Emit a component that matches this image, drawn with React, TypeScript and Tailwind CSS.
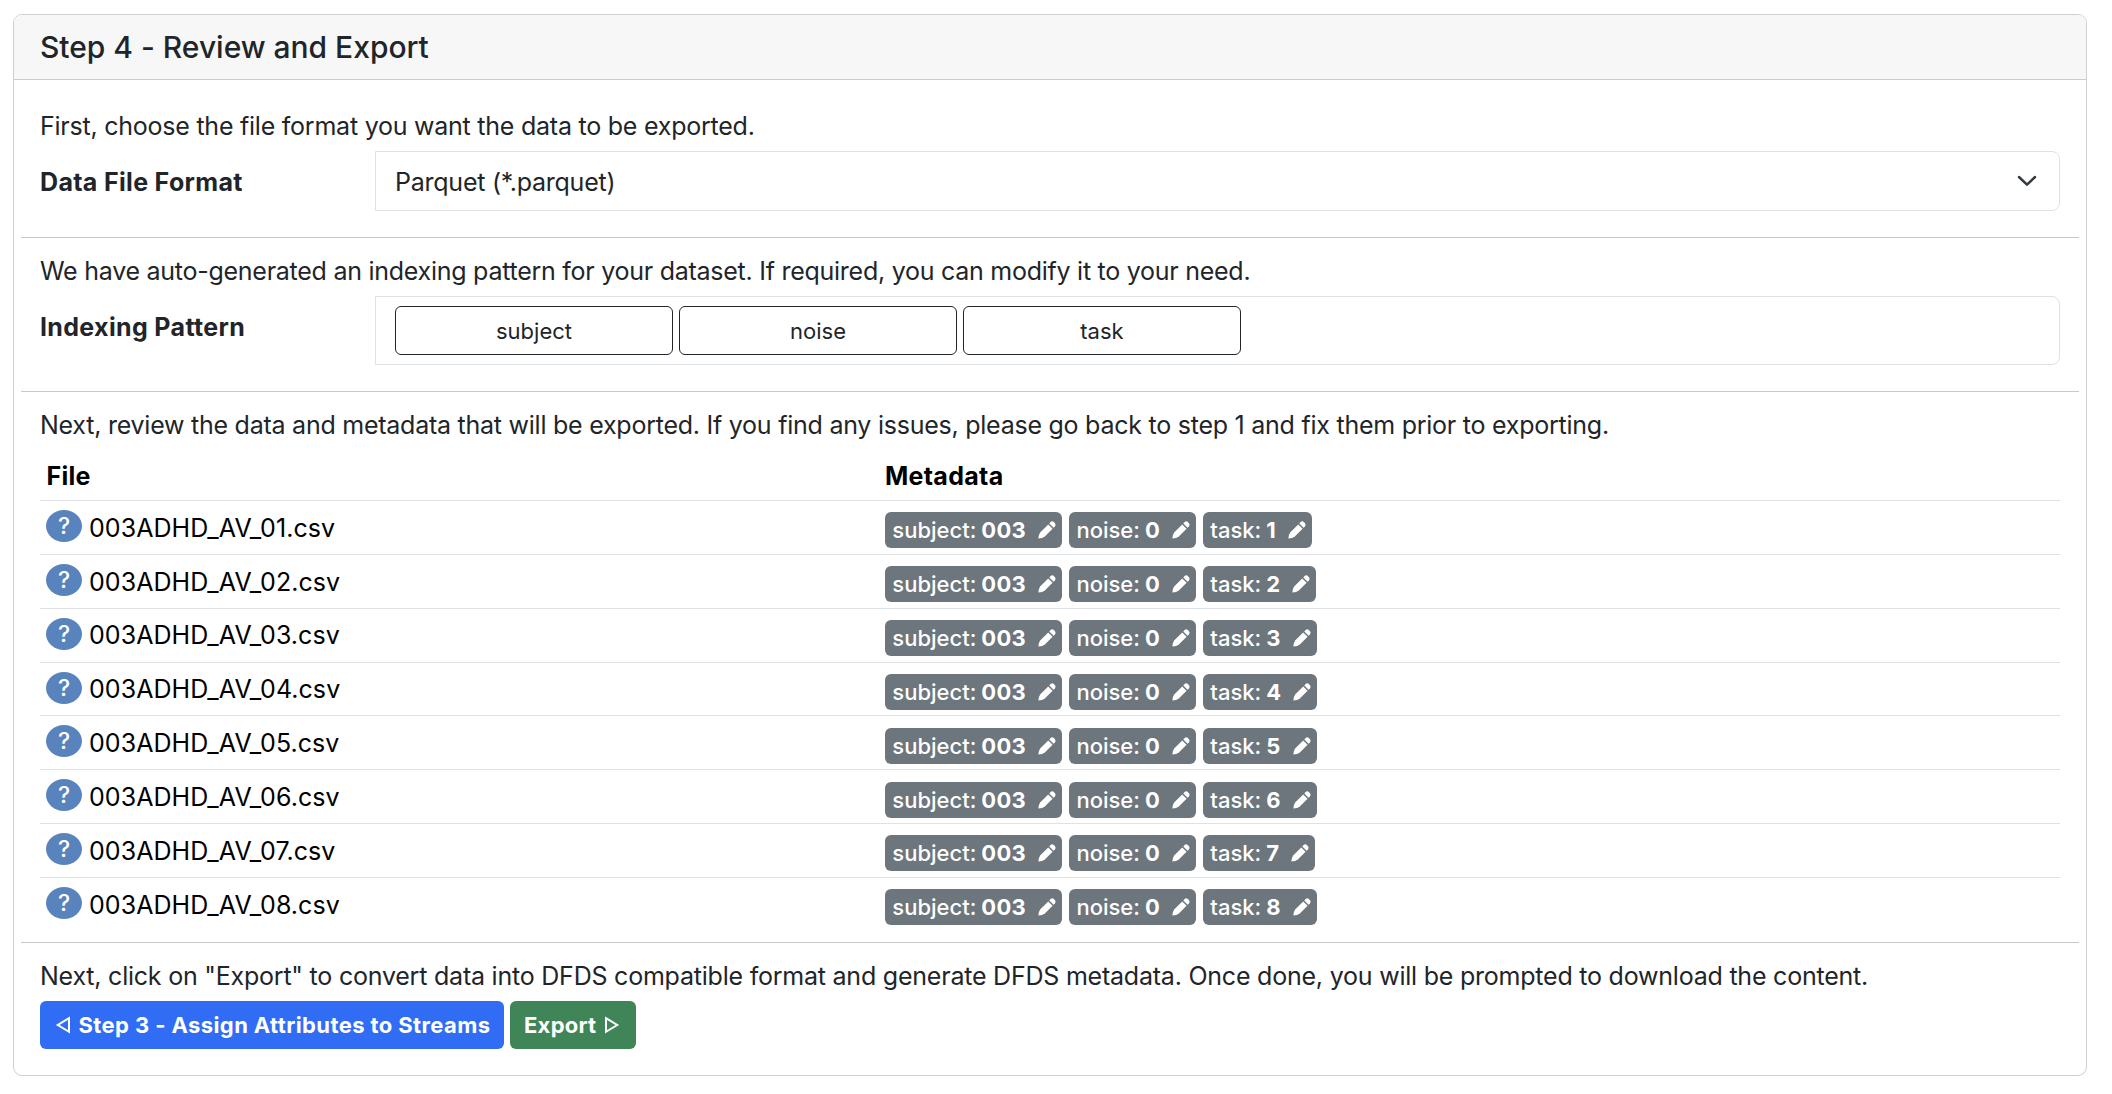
import type { ReactNode } from "react";

const files = [1, 2, 3, 4, 5, 6, 7, 8];

function Pencil() {
  return (
    <svg className="ml-[12px] h-[18px] w-[18px] shrink-0" viewBox="0 0 18 18" fill="currentColor">
      <path d="M0.4 17.6 Q0.4 13.4 2.4 11.2 L10.2 3.4 L14.6 7.8 L6.8 15.6 Q4.6 17.6 0.4 17.6 Z" />
      <path d="M11.3 2.4 L12.6 1.1 Q14.3 -0.4 16 1.2 L16.8 2 Q18.3 3.8 16.9 5.4 L15.6 6.7 Z" />
    </svg>
  );
}

function Badge({ label, value }: { label: string; value: string }) {
  return (
    <span className="flex h-9 items-center rounded-[6px] bg-[#6d757d] pl-[7.3px] pr-[6px] text-[22px] font-medium leading-9 text-white">
      <span>{label}:</span>
      <span className="ml-[5px] font-bold tracking-[0.3px]">{value}</span>
      <Pencil />
    </span>
  );
}

function Divider() {
  return <hr className="border-0 border-t border-[#c7c8c9]" />;
}

function Tag({ children }: { children: ReactNode }) {
  return (
    <div className="h-[49px] w-[278px] rounded-[6px] border border-[#212529] pt-[3px] text-center text-[22px] leading-[43px]">
      {children}
    </div>
  );
}

export default function App() {
  return (
    <div className="min-h-[1094px] bg-white pl-[13px] pt-[14px] font-['Inter',sans-serif] text-[25px] leading-[38px] text-[#212529]">
      <div className="h-[1062px] w-[2074px] overflow-hidden rounded-[9px] border border-[#d0d0d1] bg-white">
        <header className="h-[65px] border-b border-[#cbcccc] bg-[#f7f7f7] pl-[26px] pt-[1px]">
          <h1 className="whitespace-nowrap text-[30px] font-medium leading-[62px] tracking-[-0.02px]">
            Step 4 - Review and Export
          </h1>
        </header>

        <main className="whitespace-nowrap px-[7px] pt-[27px]">
          <section className="px-[19px] pb-[26px]">
            <p className="tracking-[-0.235px]">First, choose the file format you want the data to be exported.</p>
            <div className="mt-[6px] flex">
              <label className="w-[335px] pt-[12px] font-bold tracking-[0.33px]">Data File Format</label>
              <div className="flex h-[60px] flex-1 items-center justify-between rounded-r-[8px] border border-[#dee2e6] pl-[19px] pr-[22px]">
                <span className="pt-[2px] tracking-[-0.24px]">Parquet (*.parquet)</span>
                <svg className="h-[12px] w-[20px]" viewBox="0 0 20 12" fill="none">
                  <path d="M2 2 L10 9.6 L18 2" stroke="#343a40" strokeWidth="2.5" strokeLinecap="round" strokeLinejoin="round" />
                </svg>
              </div>
            </div>
          </section>

          <Divider />

          <section className="px-[19px] pb-[26px] pt-[14px]">
            <p className="tracking-[-0.26px]">
              We have auto-generated an indexing pattern for your dataset. If required, you can modify it to your need.
            </p>
            <div className="mt-[6px] flex">
              <label className="w-[335px] pt-[12px] font-bold tracking-[0.34px]">Indexing Pattern</label>
              <div className="flex h-[69px] flex-1 gap-[6px] rounded-r-[8px] border border-[#dee2e6] pl-[19px] pt-[9px]">
                <Tag>subject</Tag>
                <Tag>noise</Tag>
                <Tag>task</Tag>
              </div>
            </div>
          </section>

          <Divider />

          <section className="px-[19px] pb-[10px] pt-[14px]">
            <p className="tracking-[-0.245px]">
              Next, review the data and metadata that will be exported. If you find any issues, please go back to step 1 and fix them prior to exporting.
            </p>
            <div className="flex h-[57px] border-b border-[#dee2e6] pt-[13px] font-bold tracking-[0.3px] text-black">
              <div className="w-[845px] pl-[6.5px]">File</div>
              <div>Metadata</div>
            </div>
            {files.map((n) => (
              <div key={n} className="flex h-[53.857px] border-b border-[#dee2e6] last:border-0">
                <div className="flex w-[845px] pl-[6px] text-black">
                  <span className="mt-[9px] flex h-[32px] w-[36px] items-center justify-center rounded-[50%] bg-[#5983bd] text-[23px] font-medium leading-[32px] text-white">
                    ?
                  </span>
                  <span className="ml-[7px] pt-[7.8px] tracking-[0.06px]">003ADHD_AV_0{n}.csv</span>
                </div>
                <div className="flex gap-[7px] pt-[11.4px]">
                  <Badge label="subject" value="003" />
                  <Badge label="noise" value="0" />
                  <Badge label="task" value={String(n)} />
                </div>
              </div>
            ))}
          </section>

          <Divider />

          <section className="px-[19px] pt-[14px]">
            <p className="tracking-[-0.22px]">
              Next, click on "Export" to convert data into DFDS compatible format and generate DFDS metadata. Once done, you will be prompted to download the content.
            </p>
            <div className="mt-[6px] flex gap-[6px] text-[22px] font-bold leading-[48px] text-white">
              <button className="flex h-[48px] w-[464px] items-center rounded-[6px] bg-[#316cf4] pl-[15px]">
                <svg className="mr-[7.5px] h-[18px] w-[16px]" viewBox="0 0 16 18" fill="none">
                  <path d="M14 2.2 L2.8 9 L14 15.8 Z" stroke="white" strokeWidth="2" />
                </svg>
                <span className="tracking-[0.4px]">Step 3 - Assign Attributes to Streams</span>
              </button>
              <button className="flex h-[48px] w-[126px] items-center rounded-[6px] bg-[#408558] pl-[14px]">
                <span className="tracking-[0.25px]">Export</span>
                <svg className="ml-[7.5px] h-[18px] w-[16px]" viewBox="0 0 16 18" fill="none">
                  <path d="M2 2.2 L13.2 9 L2 15.8 Z" stroke="white" strokeWidth="2" />
                </svg>
              </button>
            </div>
          </section>
        </main>
      </div>
    </div>
  );
}
